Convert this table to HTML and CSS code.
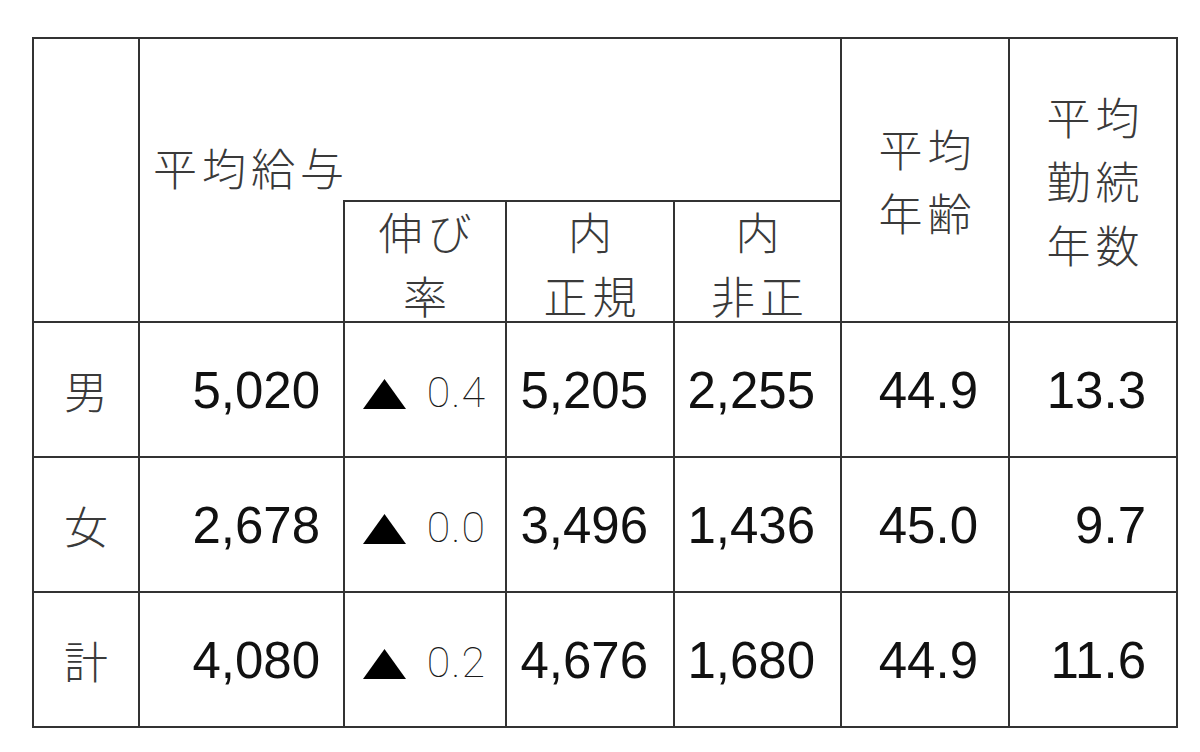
FILE: index.html
```html
<!DOCTYPE html>
<html lang="ja">
<head>
<meta charset="utf-8">
<title>平均給与</title>
<link rel="stylesheet" href="styles.css">
</head>
<body>
<div class="sheet">
  <div class="cell corner"></div>
  <div class="cell group"><span class="jp head-label">平均給与</span></div>
  <div class="cell head tall c6"><span class="jp">平均<br>年齢</span></div>
  <div class="cell head tall c7"><span class="jp">平均<br>勤続<br>年数</span></div>
  <div class="cell under"></div>
  <div class="cell head sub"><span class="jp">伸び<br>率</span></div>
  <div class="cell head sub"><span class="jp">内<br>正規</span></div>
  <div class="cell head sub"><span class="jp">内<br>非正</span></div>

  <div class="cell label"><span class="jp">男</span></div>
  <div class="cell num pad-a">5,020</div>
  <div class="cell rate"><svg class="tri" width="43" height="30" viewBox="0 0 43 30"><polygon points="21.5,0 43,30 0,30" fill="#000"/></svg><span class="rate-num">0.4</span></div>
  <div class="cell num pad-b">5,205</div>
  <div class="cell num pad-b">2,255</div>
  <div class="cell num pad-c">44.9</div>
  <div class="cell num pad-c">13.3</div>

  <div class="cell label"><span class="jp">女</span></div>
  <div class="cell num pad-a">2,678</div>
  <div class="cell rate"><svg class="tri" width="43" height="30" viewBox="0 0 43 30"><polygon points="21.5,0 43,30 0,30" fill="#000"/></svg><span class="rate-num">0.0</span></div>
  <div class="cell num pad-b">3,496</div>
  <div class="cell num pad-b">1,436</div>
  <div class="cell num pad-c">45.0</div>
  <div class="cell num pad-c">9.7</div>

  <div class="cell label"><span class="jp">計</span></div>
  <div class="cell num pad-a">4,080</div>
  <div class="cell rate"><svg class="tri" width="43" height="30" viewBox="0 0 43 30"><polygon points="21.5,0 43,30 0,30" fill="#000"/></svg><span class="rate-num">0.2</span></div>
  <div class="cell num pad-b">4,676</div>
  <div class="cell num pad-b">1,680</div>
  <div class="cell num pad-c">44.9</div>
  <div class="cell num pad-c">11.6</div>
</div>
</body>
</html>
```

FILE: styles.css
```css
html, body {
  margin: 0;
  padding: 0;
  background: #fff;
}

body {
  padding: 37px 0 0 32px;
}

.sheet {
  display: grid;
  grid-template-columns: 106px 205px 162px 168px 167px 168px 168px;
  grid-template-rows: 161px 123px 135px 135px 135px;
  width: max-content;
  border-top: 2px solid #333;
  border-left: 2px solid #333;
}

.cell {
  box-sizing: border-box;
  border-right: 2px solid #333;
  border-bottom: 2px solid #333;
  display: flex;
  align-items: center;
  min-width: 0;
}

.jp {
  font-family: "Noto Sans CJK JP", sans-serif;
  font-weight: 300;
  color: #3a3a3a;
  font-size: 44px;
  line-height: 64px;
  letter-spacing: 5px;
}

.corner {
  grid-column: 1;
  grid-row: 1 / span 2;
}

.group {
  grid-column: 2 / span 4;
  grid-row: 1;
  border-bottom: none;
  align-items: flex-end;
  padding: 0 0 0 13px;
}

.head-label {
  margin-bottom: 1px;
}

.under {
  grid-column: 2;
  grid-row: 2;
}

.head {
  justify-content: center;
  text-align: center;
}

.head .jp {
  margin-right: -5px;
}

.tall {
  grid-row: 1 / span 2;
}

.c6 { grid-column: 6; }
.c7 { grid-column: 7; }

.sub {
  border-top: 2px solid #333;
  padding-top: 2px;
}

.label {
  justify-content: center;
}

.label .jp {
  font-size: 44px;
  letter-spacing: 0;
}

.num {
  justify-content: flex-end;
  font-family: "Liberation Sans", Arial, sans-serif;
  font-size: 51px;
  color: #111;
  padding-top: 2px;
}

.pad-a { padding-right: 23px; }
.pad-b { padding-right: 25px; }
.pad-c { padding-right: 30px; }

.rate {
  justify-content: space-between;
  padding: 0 20px 0 18px;
}

.tri {
  display: block;
  margin-top: 8px;
}

.rate-num {
  font-family: "Roboto", "Liberation Sans", sans-serif;
  font-weight: 100;
  font-size: 43px;
  letter-spacing: 1px;
  margin-right: -1px;
  color: #1a1a1a;
  padding-top: 4px;
}
```
